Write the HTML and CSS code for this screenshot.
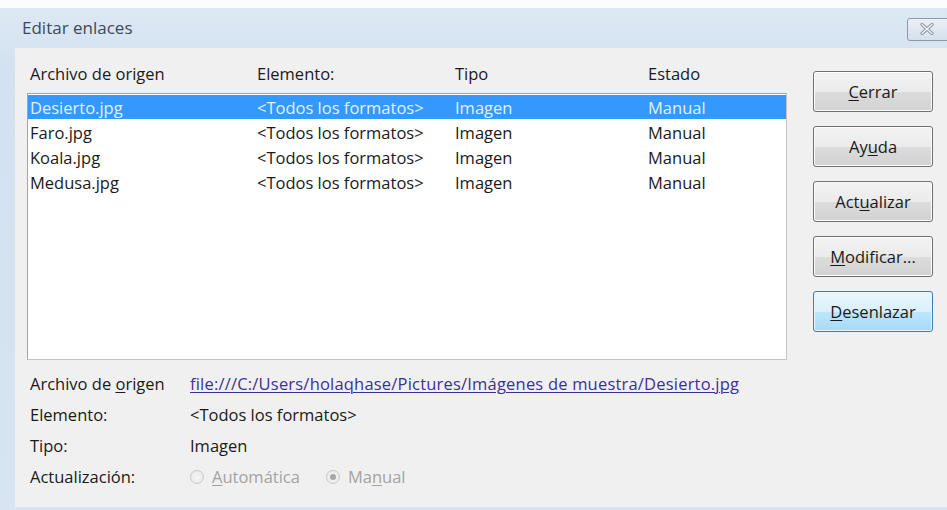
FILE: index.html
```html
<!DOCTYPE html>
<html lang="es">
<head>
<meta charset="utf-8">
<title>Editar enlaces</title>
<link rel="stylesheet" href="styles.css">
</head>
<body>
<div class="window">
  <div class="titlebar">
    <span class="title">Editar enlaces</span>
    <button class="close" type="button" aria-label="Cerrar">
      <svg width="14" height="12" viewBox="0 0 14 12">
        <path d="M2 1.5 L12 10.5 M12 1.5 L2 10.5" stroke="#8a96a4" stroke-width="3.2" stroke-linecap="round"/>
        <path d="M2 1.5 L12 10.5 M12 1.5 L2 10.5" stroke="#f4f7fa" stroke-width="1.2" stroke-linecap="round"/>
      </svg>
    </button>
  </div>

  <div class="client">
    <div class="main">
      <div class="cols head">
        <span>Archivo de origen</span>
        <span>Elemento:</span>
        <span>Tipo</span>
        <span>Estado</span>
      </div>
      <div class="list">
        <div class="cols row selected">
          <span>Desierto.jpg</span><span>&lt;Todos los formatos&gt;</span><span>Imagen</span><span>Manual</span>
        </div>
        <div class="cols row">
          <span>Faro.jpg</span><span>&lt;Todos los formatos&gt;</span><span>Imagen</span><span>Manual</span>
        </div>
        <div class="cols row">
          <span>Koala.jpg</span><span>&lt;Todos los formatos&gt;</span><span>Imagen</span><span>Manual</span>
        </div>
        <div class="cols row">
          <span>Medusa.jpg</span><span>&lt;Todos los formatos&gt;</span><span>Imagen</span><span>Manual</span>
        </div>
      </div>

      <div class="details">
        <span class="label">Archivo de <u>o</u>rigen</span>
        <a class="link" href="#">file:///C:/Users/holaqhase/Pictures/Imágenes de muestra/Desierto.jpg</a>
        <span class="label">Elemento:</span>
        <span>&lt;Todos los formatos&gt;</span>
        <span class="label">Tipo:</span>
        <span>Imagen</span>
        <span class="label">Actualización:</span>
        <span class="radios">
          <span class="radio"><span class="dot"></span><span><u>A</u>utomática</span></span>
          <span class="radio"><span class="dot checked"></span><span>Ma<u>n</u>ual</span></span>
        </span>
      </div>
    </div>

    <div class="buttons">
      <button class="btn" type="button"><u>C</u>errar</button>
      <button class="btn" type="button">Ay<u>u</u>da</button>
      <button class="btn" type="button">Act<u>u</u>alizar</button>
      <button class="btn" type="button"><u>M</u>odificar...</button>
      <button class="btn default" type="button"><u>D</u>esenlazar</button>
    </div>
  </div>
</div>
</body>
</html>
```

FILE: styles.css
```css
* {
  box-sizing: border-box;
}

html, body {
  margin: 0;
  padding: 0;
  background: #fbfcfe;
}

body {
  width: 947px;
  height: 510px;
  overflow: hidden;
  font-family: "Open Sans", "Noto Sans", sans-serif;
  font-size: 16.5px;
  color: #1a1a1a;
}

u {
  text-decoration-thickness: 1px;
  text-underline-offset: 2px;
}

/* window frame */
.window {
  margin-top: 8px;
  height: 502px;
  background: linear-gradient(#dde8f4, #d3e1f0 60px, #d7e4f2);
  display: flex;
  flex-direction: column;
  overflow: hidden;
}

.titlebar {
  height: 40px;
  flex: none;
  display: flex;
  align-items: center;
  justify-content: space-between;
  padding-left: 22px;
}

.title {
  color: #3d4a57;
  font-size: 17px;
  margin-top: -2px;
}

.close {
  width: 44px;
  height: 23px;
  margin-right: -4px;
  margin-top: 2px;
  padding: 0 4px 0 0;
  border: 1px solid #8c9aab;
  border-radius: 3px;
  background: linear-gradient(#eaf0f7, #d5e0ec);
  display: flex;
  align-items: center;
  justify-content: center;
}

/* dialog client area */
.client {
  flex: 1;
  margin-left: 15px;
  margin-bottom: 3px;
  background: #f0f0f0;
  display: flex;
}

.main {
  width: 772px;
  padding-left: 12px;
  display: flex;
  flex-direction: column;
}

.cols {
  display: grid;
  grid-template-columns: 227px 198px 193px 1fr;
  padding-left: 3px;
  white-space: nowrap;
}

.head {
  height: 45px;
  align-items: center;
  padding-top: 6px;
}

.list {
  height: 267px;
  background: #fff;
  border: 1px solid #a4a4a4;
  border-right-color: #c4c4c4;
  border-bottom-color: #c4c4c4;
  padding-top: 1px;
  flex: none;
}

.row {
  height: 25px;
  align-items: center;
  padding-left: 2px;
}

.row.selected {
  background: #3399ff;
  color: #e2f0ff;
  height: 24px;
  margin-bottom: 1px;
}

/* selected entry properties */
.details {
  display: grid;
  grid-template-columns: 160px 1fr;
  grid-auto-rows: 31px;
  align-items: center;
  padding-left: 3px;
  padding-top: 8px;
  white-space: nowrap;
}

.link {
  color: #3a3294;
  letter-spacing: 0.2px;
  text-decoration: underline;
  text-decoration-thickness: 1px;
  text-underline-offset: 2px;
}

.radios {
  display: flex;
  gap: 26px;
  color: #a3a3a3;
}

.radio {
  display: flex;
  align-items: center;
  gap: 8px;
}

.dot {
  width: 14px;
  height: 14px;
  border-radius: 50%;
  border: 1px solid #c9c9c9;
  background: radial-gradient(#f6f6f6, #e6e6e6);
  position: relative;
}

.dot.checked::after {
  content: "";
  position: absolute;
  left: 3px;
  top: 3px;
  width: 6px;
  height: 6px;
  border-radius: 50%;
  background: #a6a6a6;
}

/* command buttons */
.buttons {
  padding-left: 26px;
  padding-top: 23px;
  display: flex;
  flex-direction: column;
  gap: 14px;
}

.btn {
  width: 120px;
  height: 41px;
  font-family: inherit;
  font-size: 16.5px;
  color: #1a1a1a;
  border: 1px solid #707070;
  border-radius: 3px;
  background: linear-gradient(#f3f3f3, #ebebeb 50%, #dcdcdc 51%, #d2d2d2);
  box-shadow: inset 0 0 0 1px #fcfcfc;
  padding: 0;
}

.btn.default {
  border-color: #3c7fb1;
  background: linear-gradient(#eaf6fd, #d9f0fc 50%, #bee6fd 51%, #a7d9f5);
  box-shadow: inset 0 0 0 1px #e8f5fd;
}
```
